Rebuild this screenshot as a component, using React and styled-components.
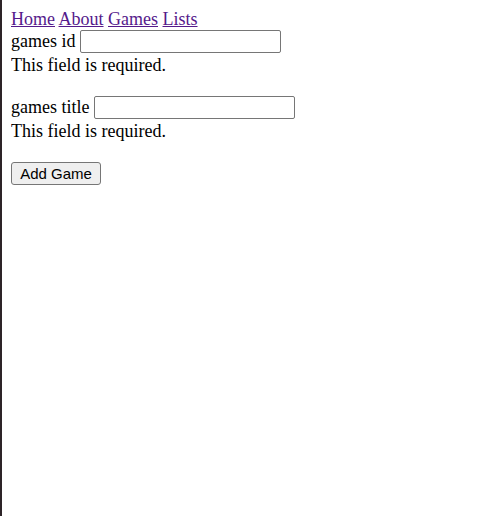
import React from "react";
import styled, { createGlobalStyle } from "styled-components";

const Global = createGlobalStyle`
  html {
    border-left: 2px solid #2d2428;
    min-height: 100%;
    background: #fff;
  }
  body {
    margin: 9px;
    font-family: "Liberation Serif", "Times New Roman", serif;
    font-size: 18px;
    line-height: normal;
    color: #000;
  }
`;

const Nav = styled.nav`
  display: block;
`;

const NavLink = styled.a`
  color: #551a8b;
  text-decoration: underline;
`;

const Form = styled.form`
  display: block;
`;

const Field = styled.div`
  display: block;
  padding-bottom: 2px;
`;

const Label = styled.label`
  font: inherit;
`;

const Input = styled.input`
  box-sizing: border-box;
  width: 201px;
  height: 23px;
  margin: 0;
  padding: 1px 2px;
  border: 1px solid #767676;
  border-radius: 2px;
  font-family: "Liberation Sans", Arial, sans-serif;
  font-size: 15px;
  vertical-align: baseline;
  background: #fff;
`;

const Error = styled.div`
  display: block;
`;

const Spacer = styled.div`
  height: 20px;
`;

const Button = styled.button`
  box-sizing: border-box;
  width: 90px;
  height: 23px;
  margin: 0;
  padding: 0 6px;
  border: 1px solid #767676;
  border-radius: 3px;
  background: #efefef;
  color: #000;
  font-family: "Liberation Sans", Arial, sans-serif;
  font-size: 15px;
`;

export default function App() {
  return (
    <>
      <Global />
      <Nav>
        <NavLink href="#">Home</NavLink> <NavLink href="#">About</NavLink>{" "}
        <NavLink href="#">Games</NavLink> <NavLink href="#">Lists</NavLink>
      </Nav>
      <Form onSubmit={(e) => e.preventDefault()}>
        <Field>
          <Label htmlFor="gid">games id</Label> <Input id="gid" type="text" />
        </Field>
        <Error>This field is required.</Error>
        <Spacer />
        <Field>
          <Label htmlFor="gtitle">games title</Label>{" "}
          <Input id="gtitle" type="text" />
        </Field>
        <Error>This field is required.</Error>
        <Spacer />
        <Button type="submit">Add Game</Button>
      </Form>
    </>
  );
}
